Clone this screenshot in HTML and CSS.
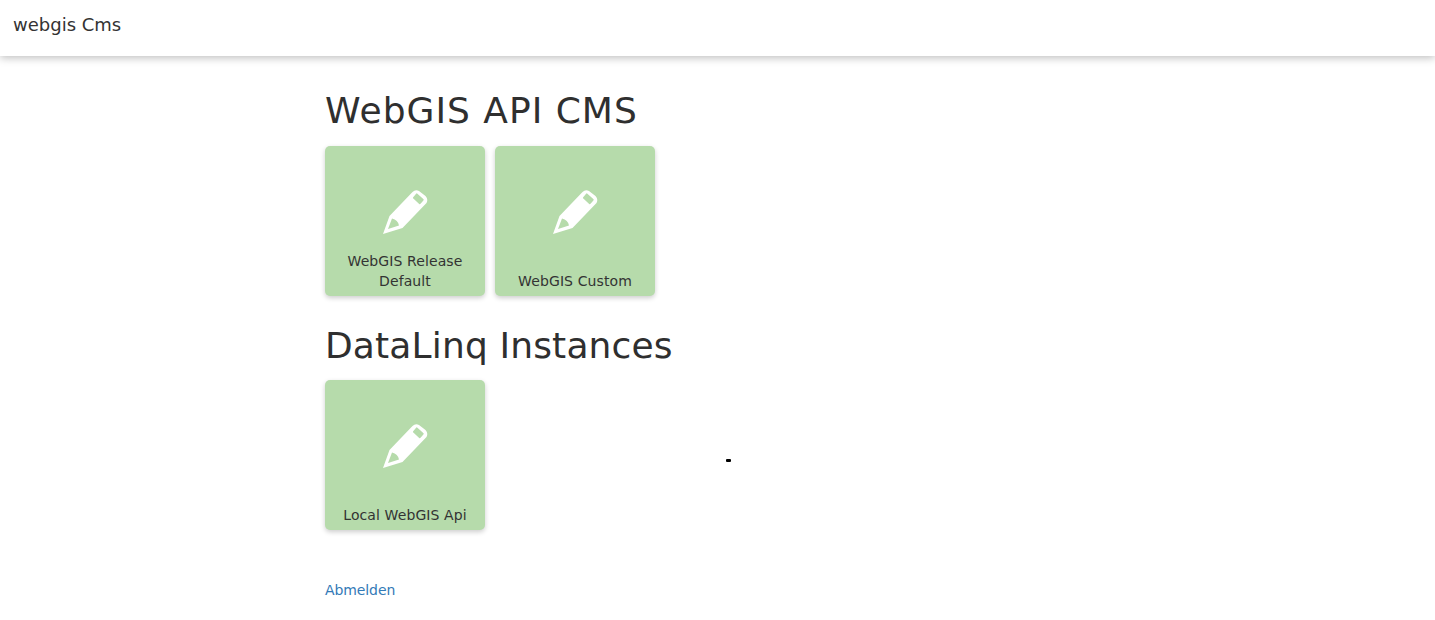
FILE: index.html
```html
<!DOCTYPE html>
<html lang="de">
<head>
<meta charset="utf-8">
<title>webgis Cms</title>
<link rel="stylesheet" href="styles.css">
</head>
<body>
<header class="navbar"><span class="brand">webgis Cms</span></header>
<main class="content">
  <h1 class="title first">WebGIS API CMS</h1>
  <div class="tiles">
    <a class="tile" href="#">
      <svg class="pencil" viewBox="0 0 46 46"><path class="pen" fill-rule="evenodd" d="M0 44 L6.500 26 L29.500 2 Q32.500 -1 36 1 L42.500 6 Q45.500 9 43.500 13 L19.500 38 Z M30.200 7.200 L33.100 3.800 Q33.700 3 34.400 3.700 L40.300 9 Q41 9.600 40.400 10.400 L37.500 13.800 Q36.900 14.600 36.200 13.900 L30.300 8.600 Q29.600 8 30.200 7.200 Z M9 28.500 L5 39 L16 35.500 Q15 30 9 28.500 Z"/></svg>
      <span class="label">WebGIS Release Default</span>
    </a>
    <a class="tile" href="#">
      <svg class="pencil" viewBox="0 0 46 46"><path class="pen" fill-rule="evenodd" d="M0 44 L6.500 26 L29.500 2 Q32.500 -1 36 1 L42.500 6 Q45.500 9 43.500 13 L19.500 38 Z M30.200 7.200 L33.100 3.800 Q33.700 3 34.400 3.700 L40.300 9 Q41 9.600 40.400 10.400 L37.500 13.800 Q36.900 14.600 36.200 13.900 L30.300 8.600 Q29.600 8 30.200 7.200 Z M9 28.500 L5 39 L16 35.500 Q15 30 9 28.500 Z"/></svg>
      <span class="label">WebGIS Custom</span>
    </a>
  </div>
  <h1 class="title second">DataLinq Instances</h1>
  <div class="tiles">
    <a class="tile" href="#">
      <svg class="pencil" viewBox="0 0 46 46"><path class="pen" fill-rule="evenodd" d="M0 44 L6.500 26 L29.500 2 Q32.500 -1 36 1 L42.500 6 Q45.500 9 43.500 13 L19.500 38 Z M30.200 7.200 L33.100 3.800 Q33.700 3 34.400 3.700 L40.300 9 Q41 9.600 40.400 10.400 L37.500 13.800 Q36.900 14.600 36.200 13.900 L30.300 8.600 Q29.600 8 30.200 7.200 Z M9 28.500 L5 39 L16 35.500 Q15 30 9 28.500 Z"/></svg>
      <span class="label">Local WebGIS Api</span>
    </a>
  </div>
  <p class="logout"><a href="#">Abmelden</a></p>
</main>
<div class="speck"></div>
</body>
</html>
```
FILE: styles.css
```css
* { box-sizing: border-box; }
html, body { margin: 0; height: 100%; overflow: hidden; }
body {
  font-family: "DejaVu Sans", Verdana, sans-serif;
  color: #333;
  background: #fff;
  position: relative;
}
.navbar {
  height: 56px;
  display: flex;
  align-items: center;
  padding: 0 0 6px 13px;
  background: #fff;
  box-shadow: 0 2px 8px rgba(0, 0, 0, 0.25);
}
.brand { font-size: 18px; line-height: 20px; color: #333; }
.content { width: 785px; margin-left: 325px; padding-top: 32px; }
.title {
  margin: 0;
  font-size: 36px;
  font-weight: 400;
  line-height: 46px;
  height: 58px;
  color: #2f2f2f;
}
.first { letter-spacing: 1px; }
.second { margin-top: 26px; letter-spacing: 0.15px; padding-top: 1px; }
.tiles { display: flex; gap: 10px; }
.tile {
  width: 160px;
  height: 150px;
  background: #b6dbab;
  border-radius: 5px;
  box-shadow: 0 2px 5px rgba(0, 0, 0, 0.2);
  color: #333;
  text-decoration: none;
  display: flex;
  flex-direction: column;
  align-items: center;
  padding: 0 16px 5px;
}
.pencil { width: 46px; height: 46px; margin: 44px 0 0 1px; flex: none; }
.pen { fill: #fff; }
.label {
  margin-top: auto;
  font-size: 14px;
  line-height: 20px;
  text-align: center;
  letter-spacing: 0.1px;
}
.logout { margin: 50px 0 0; font-size: 14px; line-height: 20px; letter-spacing: -0.1px; }
.logout a { color: #337ab7; text-decoration: none; }
.speck {
  position: absolute;
  left: 726px;
  top: 459px;
  width: 5px;
  height: 3px;
  background: #000;
  border-radius: 1px;
}
```
